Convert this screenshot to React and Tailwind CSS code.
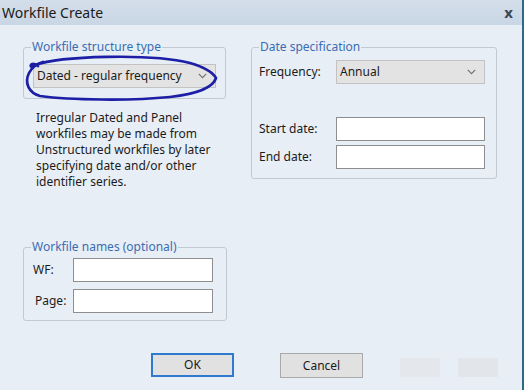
import React from "react";

function Chevron({ className = "" }) {
  return (
    <svg width="9" height="6" viewBox="0 0 9 6" className={className}>
      <path d="M0.8 0.8 L4.5 4.6 L8.2 0.8" fill="none" stroke="#6f6f6f" strokeWidth="1.1" />
    </svg>
  );
}

function Dropdown({ value, className = "" }) {
  return (
    <div className={`flex items-center justify-between h-[24px] border border-[#c2c2c2] bg-[#e3e3e3] pl-[3px] pr-[8px] ${className}`}>
      <span>{value}</span>
      <Chevron />
    </div>
  );
}

function TextInput({ className = "" }) {
  return <div className={`h-[24px] border border-[#8e8e8e] bg-white ${className}`} />;
}

export default function App() {
  return (
    <div className="relative w-[524px] h-[390px] overflow-hidden bg-[#e8eef5] border-r-2 border-[#2e6a86] flex flex-col font-['Noto_Sans',sans-serif] text-[12px] text-[#1b1b1b]">
      {/* Title bar */}
      <div className="h-[25px] shrink-0 bg-gradient-to-b from-[#d3deea] to-[#c9d6e4] flex items-center justify-between pl-[2px] pr-[9px]">
        <span className="text-[14px] text-[#1a1a1a] leading-none">Workfile Create</span>
        <span className="text-[15px] font-bold text-[#3c4652] leading-none">x</span>
      </div>

      {/* Body */}
      <div className="flex pt-[14px] pl-[23px]">
        {/* Left column */}
        <div className="w-[203px] flex flex-col">
          <fieldset className="border border-[#c3c9d1] rounded-[3px] pl-[9px] pr-[8px] pt-[9px] pb-[10px]">
            <legend className="ml-[-2px] px-[1px] leading-[16px] text-[#3a6db4]">Workfile structure type</legend>
            <Dropdown value="Dated - regular frequency" className="w-[183px]" />
          </fieldset>

          <p className="mt-[11px] pl-[13px] leading-[16px]">
            Irregular Dated and Panel
            <br />
            workfiles may be made from
            <br />
            Unstructured workfiles by later
            <br />
            specifying date and/or other
            <br />
            identifier series.
          </p>

          <fieldset className="mt-[49px] border border-[#c3c9d1] rounded-[3px] pl-[9px] pr-[13px] pt-[3px] pb-[7px]">
            <legend className="ml-[-2px] px-[1px] leading-[16px] text-[#3a6db4]">Workfile names (optional)</legend>
            <div className="flex items-center">
              <span className="w-[40px]">WF:</span>
              <TextInput className="w-[140px]" />
            </div>
            <div className="flex items-center mt-[7px]">
              <span className="w-[40px] pl-[2px]">Page:</span>
              <TextInput className="w-[140px]" />
            </div>
          </fieldset>
        </div>

        {/* Right column */}
        <div className="ml-[25px] w-[246px]">
          <fieldset className="border border-[#c3c9d1] rounded-[3px] pl-[7px] pr-[11px] pt-[5px] pb-[9px]">
            <legend className="px-[1px] leading-[16px] text-[#3a6db4]">Date specification</legend>
            <div className="flex items-center">
              <span className="w-[77px]">Frequency:</span>
              <Dropdown value="Annual" className="w-[149px]" />
            </div>
            <div className="flex items-center mt-[33px]">
              <span className="w-[77px]">Start date:</span>
              <TextInput className="w-[149px]" />
            </div>
            <div className="flex items-center mt-[4px]">
              <span className="w-[77px]">End date:</span>
              <TextInput className="w-[149px] h-[23px]" />
            </div>
          </fieldset>
        </div>
      </div>

      {/* Buttons */}
      <div className="flex items-start mt-[32px] pl-[151px]">
        <button className="w-[83px] h-[24px] border-2 border-[#2f79cf] bg-[#e1e1e1] text-[12px] leading-none">OK</button>
        <button className="ml-[46px] w-[83px] h-[25px] border border-[#a9a9a9] bg-[#e1e1e1] text-[12px] leading-none">Cancel</button>
        <div className="ml-[37px] mt-[5px] w-[40px] h-[19px] bg-[#e4e8ed]" />
        <div className="ml-[18px] mt-[5px] w-[40px] h-[19px] bg-[#e2e6ea]" />
      </div>

      {/* Hand-drawn annotation */}
      <svg className="absolute left-0 top-0 pointer-events-none" width="524" height="390" viewBox="0 0 524 390">
        <path
          d="M38 66 C30 59 28 71 35 65 C60 56 150 53 190 63 C204 67 213 73 216 78 C213 88 196 94 170 97 C130 101 70 100 40 96 C29 93 24 83 29 73 C32 67 36 64 43 62"
          fill="none"
          stroke="#1c1fa6"
          strokeWidth="2.7"
          strokeLinecap="round"
          strokeLinejoin="round"
        />
      </svg>
    </div>
  );
}
